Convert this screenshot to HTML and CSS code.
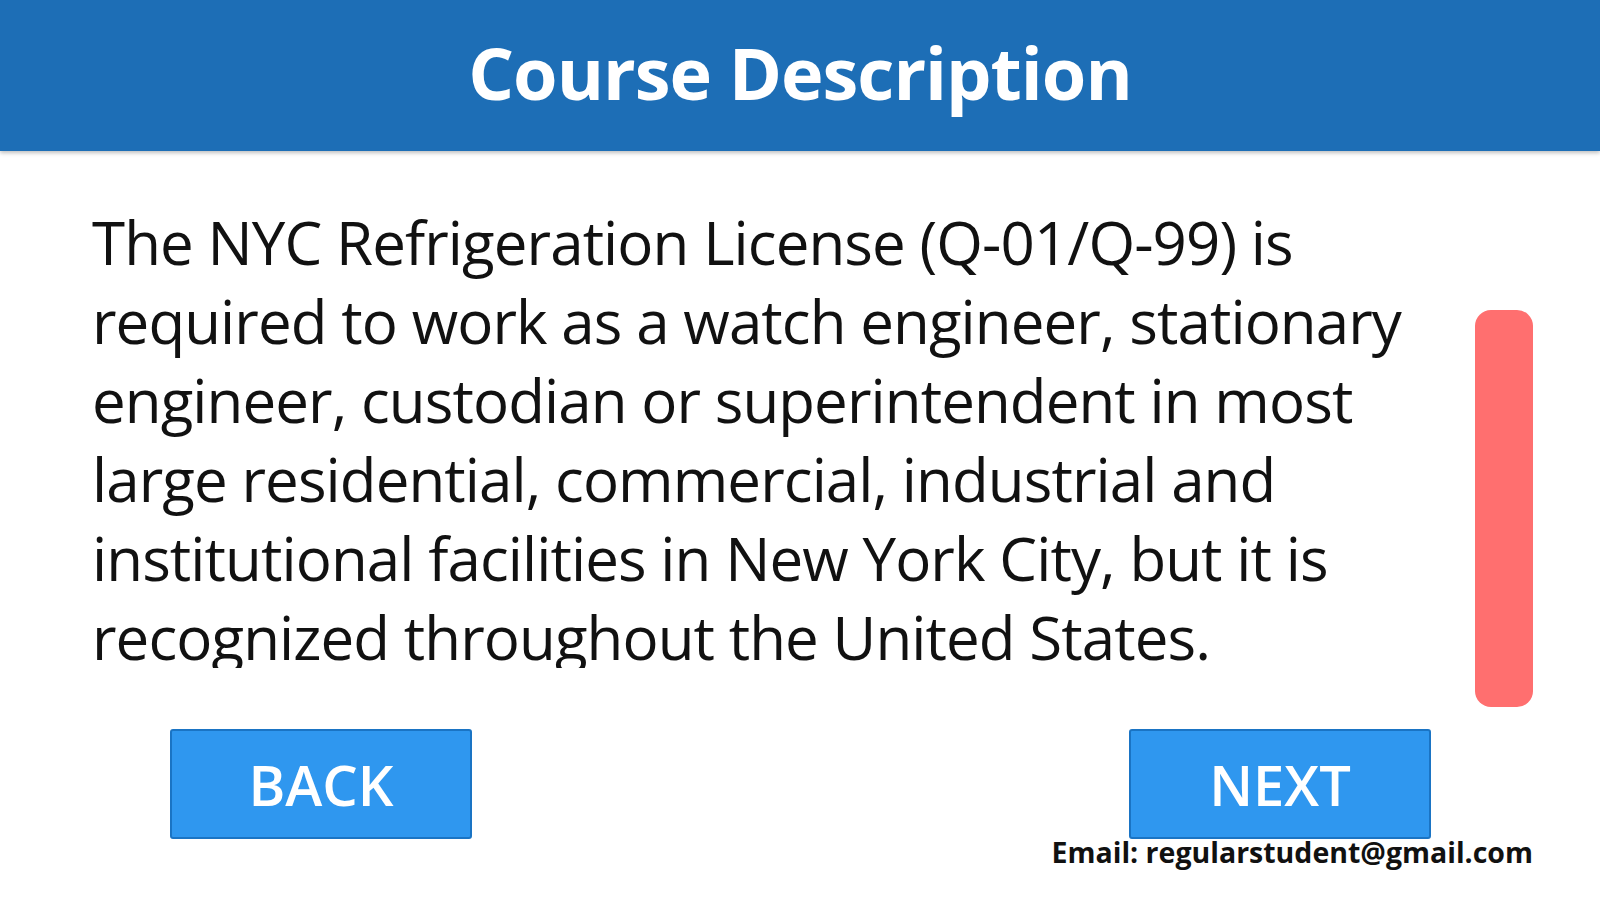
FILE: index.html
```html
<!DOCTYPE html>
<html lang="en">
<head>
  <meta charset="UTF-8" />
  <meta name="viewport" content="width=device-width, initial-scale=1.0"/>
  <title>Course Description</title>
  <link rel="stylesheet" href="styles.css">
</head>
<body>
<header>
  <h1>Course Description</h1>
</header>

<main class="content">
  <div class="desc">
    <p>The NYC Refrigeration License (Q-01/Q-99) is required to work as a watch engineer, stationary engineer, custodian or superintendent in most large residential, commercial, industrial and institutional facilities in New York City, but it is recognized throughout the United States.</p>
  </div>
  <div class="track">
    <div class="thumb"></div>
  </div>
</main>

<footer>
  <div class="nav-buttons">
    <button class="btn">BACK</button>
    <button class="btn">NEXT</button>
  </div>
  <div class="email">Email: regularstudent@gmail.com</div>
</footer>
</body>
</html>
```

FILE: styles.css
```css
* {
  margin: 0;
  padding: 0;
  box-sizing: border-box;
}

html, body {
  height: 100%;
  font-family: "Open Sans", Arial, sans-serif;
  background: #fff;
  color: #111;
  overflow: hidden;
}

header {
  height: 151px;
  background: #1d6eb6;
  color: white;
  display: flex;
  align-items: center;
  justify-content: center;
  box-shadow: 0 2px 4px rgba(0,0,0,0.25);
  position: relative;
  z-index: 2;
}

header h1 {
  font-size: 72px;
  font-weight: 700;
  letter-spacing: -1px;
  padding-bottom: 8px;
}

.content {
  height: 578px;
  display: flex;
}

.desc {
  margin: 52px 0 0 92px;
  width: 1350px;
  height: 465px;
  overflow: hidden;
}

.desc p {
  font-size: 60px;
  line-height: 79px;
  letter-spacing: -0.9px;
}

.track {
  padding: 159px 0 0 33px;
}

.thumb {
  width: 58px;
  height: 397px;
  background: #ff6f6f;
  border-radius: 16px;
}

.nav-buttons {
  display: flex;
  justify-content: space-between;
  padding: 0 169px 0 170px;
}

.btn {
  width: 302px;
  height: 110px;
  background: #2f97ef;
  border: 2px solid #1a74c4;
  border-radius: 3px;
  color: white;
  font-family: "Open Sans", Arial, sans-serif;
  font-size: 56px;
  font-weight: 600;
}

.email {
  text-align: right;
  padding-right: 67px;
  font-size: 28.5px;
  font-weight: 700;
  line-height: 26px;
  color: #111;
}
```
